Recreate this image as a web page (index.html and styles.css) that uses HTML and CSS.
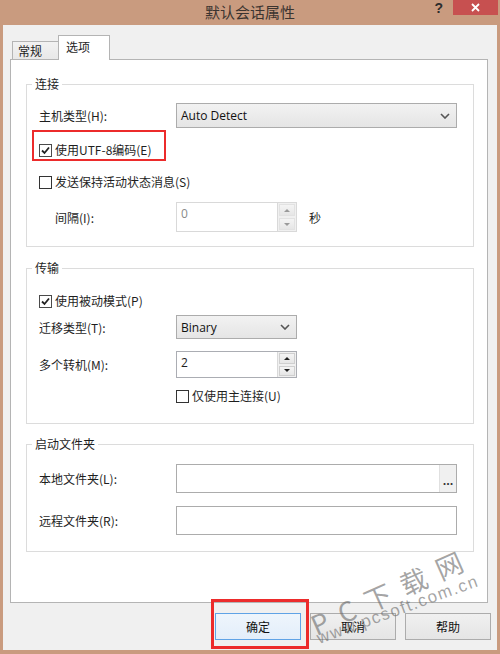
FILE: index.html
```html
<!DOCTYPE html>
<html lang="zh-CN">
<head>
    <meta charset="UTF-8">
    <meta name="viewport" content="width=device-width, initial-scale=1.0">
    <title>默认会话属性</title>
    <link rel="stylesheet" href="styles.css">
</head>
<body>
    <div class="titlebar">
        <span class="title">默认会话属性</span>
        <div class="controls">
            <span class="help">?</span>
            <span class="close">
                <svg width="9" height="9" viewBox="0 0 9 9"><path d="M1 1L8 8M8 1L1 8" stroke="#fff" stroke-width="1.8"/></svg>
            </span>
        </div>
    </div>

    <div class="client">
        <div class="tabs">
            <div class="tab">常规</div>
            <div class="tab active">选项</div>
        </div>

        <div class="panel">
            <fieldset class="group g1">
                <legend>连接</legend>
                <div class="row r-host">
                    <span class="lbl">主机类型(H):</span>
                    <div class="select wide">
                        <span>Auto Detect</span>
                        <svg width="10" height="6" viewBox="0 0 10 6"><path d="M1 1L5 5L9 1" fill="none" stroke="#555" stroke-width="1.6"/></svg>
                    </div>
                </div>
                <div class="row r-utf">
                    <label class="check hl">
                        <span class="box on"><svg width="11" height="11" viewBox="0 0 11 11"><path d="M2 5.5L4.5 8L9 2.5" fill="none" stroke="#222" stroke-width="1.8"/></svg></span>
                        使用UTF-8编码(E)
                        <span class="mark mark-utf"></span>
                    </label>
                </div>
                <div class="row r-keep">
                    <label class="check">
                        <span class="box"></span>
                        发送保持活动状态消息(S)
                    </label>
                </div>
                <div class="row r-interval">
                    <span class="lbl indent">间隔(I):</span>
                    <div class="spin disabled">
                        <span class="spin-val">0</span>
                        <span class="spin-btns">
                            <span class="sbtn"><i class="tri up"></i></span>
                            <span class="sbtn"><i class="tri down"></i></span>
                        </span>
                    </div>
                    <span class="unit">秒</span>
                </div>
            </fieldset>

            <fieldset class="group g2">
                <legend>传输</legend>
                <div class="row r-passive">
                    <label class="check">
                        <span class="box on"><svg width="11" height="11" viewBox="0 0 11 11"><path d="M2 5.5L4.5 8L9 2.5" fill="none" stroke="#222" stroke-width="1.8"/></svg></span>
                        使用被动模式(P)
                    </label>
                </div>
                <div class="row r-mode">
                    <span class="lbl">迁移类型(T):</span>
                    <div class="select narrow">
                        <span>Binary</span>
                        <svg width="10" height="6" viewBox="0 0 10 6"><path d="M1 1L5 5L9 1" fill="none" stroke="#555" stroke-width="1.6"/></svg>
                    </div>
                </div>
                <div class="row r-multi">
                    <span class="lbl">多个转机(M):</span>
                    <div class="spin short">
                        <span class="spin-val">2</span>
                        <span class="spin-btns">
                            <span class="sbtn"><i class="tri up"></i></span>
                            <span class="sbtn"><i class="tri down"></i></span>
                        </span>
                    </div>
                </div>
                <div class="row r-main">
                    <label class="check">
                        <span class="box"></span>
                        仅使用主连接(U)
                    </label>
                </div>
            </fieldset>

            <fieldset class="group g3">
                <legend>启动文件夹</legend>
                <div class="row r-local">
                    <span class="lbl">本地文件夹(L):</span>
                    <div class="field">
                        <span class="browse">...</span>
                    </div>
                </div>
                <div class="row r-remote">
                    <span class="lbl">远程文件夹(R):</span>
                    <div class="field"></div>
                </div>
            </fieldset>
        </div>

        <div class="actions">
            <button class="btn primary">确定<span class="mark mark-ok"></span></button>
            <button class="btn">取消</button>
            <button class="btn">帮助</button>
        </div>
    </div>

    <div class="watermark">
        <span class="wm-pc">PC下载网</span>
        <span class="wm-url">www.pcsoft.com.cn</span>
    </div>
</body>
</html>
```

FILE: styles.css
```css
body {
    margin: 0;
    width: 500px;
    height: 654px;
    overflow: hidden;
    position: relative;
    background-color: #c99b7f;
    font-family: "Noto Sans CJK SC", "Noto Sans", sans-serif;
    font-size: 12px;
    color: #1e1e1e;
}

.titlebar {
    height: 25px;
    display: grid;
    grid-template-columns: 1fr auto 1fr;
    align-items: start;
}

.title {
    grid-column: 2;
    font-size: 15px;
    line-height: 24px;
    color: #3b3430;
}

.controls {
    grid-column: 3;
    justify-self: end;
    display: flex;
    align-items: flex-start;
    margin-right: 2px;
}

.help {
    font-family: "Liberation Sans", sans-serif;
    font-weight: bold;
    font-size: 14px;
    line-height: 14px;
    color: #2d2d2d;
    margin: 1px 10px 0 0;
}

.close {
    width: 45px;
    height: 15px;
    background-color: #c75050;
    display: flex;
    align-items: center;
    justify-content: center;
}

.client {
    margin: 0 3px;
    height: 625px;
    box-sizing: border-box;
    background-color: #f0f0f0;
    padding: 10px 9px 0 7px;
}

/* tabs */
.tabs {
    display: flex;
    align-items: flex-end;
    height: 24px;
    padding-left: 2px;
    position: relative;
    z-index: 1;
}

.tab {
    width: 47px;
    height: 18px;
    box-sizing: border-box;
    border: 1px solid #b4b4b4;
    border-bottom: none;
    background: linear-gradient(#f2f2f2, #e8e8e8);
    padding-left: 5px;
    line-height: 17px;
}

.tab.active {
    width: 52px;
    height: 25px;
    margin-left: -1px;
    margin-bottom: -1px;
    background: #fff;
    padding-left: 7px;
    line-height: 21px;
}

.panel {
    height: 544px;
    box-sizing: border-box;
    border: 1px solid #b4b4b4;
    background-color: #fff;
    padding: 0 13px 0 15px;
}

/* groups */
.group {
    margin: 0;
    min-width: 0;
    border: 1px solid #dcdcdc;
    padding: 0 15px 14px 12px;
}

.group legend {
    padding: 0 3px;
    margin-left: -7px;
    line-height: 16px;
}

.g1 { margin-top: 16px; }
.g2 { margin-top: 13px; padding-bottom: 15px; }
.g3 { margin-top: 12px; padding-bottom: 16px; }

.row {
    display: flex;
    align-items: center;
}

.lbl {
    width: 137px;
    flex: none;
}

.lbl.indent {
    padding-left: 16px;
    box-sizing: border-box;
}

.r-host { margin-top: 11px; height: 25px; }
.r-utf { margin-top: 10px; height: 24px; }
.r-keep { margin-top: 8px; height: 24px; }
.r-interval { margin-top: 8px; height: 30px; }

.r-passive { margin-top: 13px; height: 24px; }
.r-mode { margin-top: 2px; height: 24px; }
.r-multi { margin-top: 12px; height: 27px; }
.r-main { margin-top: 6px; height: 24px; padding-left: 137px; }

.r-local { margin-top: 12px; height: 29px; }
.r-remote { margin-top: 13px; height: 29px; }

/* checkbox */
.check {
    display: flex;
    align-items: center;
    gap: 3px;
    line-height: 16px;
}

.box {
    width: 13px;
    height: 13px;
    box-sizing: border-box;
    border: 1px solid #333;
    background: #fff;
    display: flex;
    align-items: center;
    justify-content: center;
}

.box.on {
    border-color: #4a4a4a;
}

.hl {
    position: relative;
}

.mark {
    position: absolute;
    border: 2px solid #ec2b2b;
    pointer-events: none;
}

.mark-utf {
    left: -7px;
    top: -12px;
    width: 130px;
    height: 27px;
}

/* select */
.select {
    height: 100%;
    box-sizing: border-box;
    border: 1px solid #acacac;
    background: linear-gradient(#f2f2f2, #e5e5e5);
    display: flex;
    align-items: center;
    justify-content: space-between;
    padding: 0 6px 0 4px;
    font-family: "Open Sans", sans-serif;
    font-size: 12px;
    color: #111;
}

.select.wide { width: 281px; }
.select.narrow { width: 121px; }

/* spinner */
.spin {
    width: 121px;
    height: 100%;
    box-sizing: border-box;
    border: 1px solid #abadb3;
    background: #fff;
    display: flex;
}

.spin.disabled {
    border-color: #d9d9d9;
    color: #8a8a8a;
}

.spin-val {
    flex: 1;
    padding: 3px 0 0 4px;
    line-height: 16px;
    font-family: "Open Sans", sans-serif;
}

.spin-btns {
    width: 18px;
    display: flex;
    flex-direction: column;
    background: #f0f0f0;
    border-left: 1px solid #d9d9d9;
}

.sbtn {
    flex: 1;
    margin: 1px;
    border: 1px solid #cfcfcf;
    background: linear-gradient(#f4f4f4, #e6e6e6);
    display: flex;
    align-items: center;
    justify-content: center;
}

.spin.disabled .sbtn {
    border-color: #e2e2e2;
}

.tri {
    width: 0;
    height: 0;
    border-left: 3px solid transparent;
    border-right: 3px solid transparent;
}

.tri.up { border-bottom: 3px solid #222; }
.tri.down { border-top: 3px solid #222; }

.spin.disabled .tri.up { border-bottom-color: #9a9a9a; }
.spin.disabled .tri.down { border-top-color: #9a9a9a; }

.unit {
    margin-left: 12px;
}

/* text fields */
.field {
    width: 281px;
    height: 100%;
    box-sizing: border-box;
    border: 1px solid #acacac;
    background: #fff;
    display: flex;
    justify-content: flex-end;
}

.browse {
    width: 16px;
    background: #f0f0f0;
    border-left: 1px solid #e0e0e0;
    text-align: center;
    line-height: 30px;
    font-size: 11px;
    font-weight: bold;
    color: #333;
}

/* buttons */
.actions {
    display: flex;
    justify-content: flex-end;
    gap: 9px;
    margin: 10px -3px 0 0;
}

.btn {
    width: 86px;
    height: 27px;
    box-sizing: border-box;
    border: 1px solid #acacac;
    background: linear-gradient(#f0f0f0, #e5e5e5);
    font-family: "Noto Sans CJK SC", sans-serif;
    font-size: 12px;
    color: #111;
    padding: 0;
}

.btn.primary {
    position: relative;
    border-color: #5fa3e6;
    background: linear-gradient(#eef5fc, #e3eefa);
}

.mark-ok {
    left: -5px;
    top: -15px;
    width: 92px;
    height: 44px;
    border-width: 3px;
}

/* watermark overlay */
.watermark {
    position: absolute;
    inset: 0;
    pointer-events: none;
}

.wm-pc {
    position: absolute;
    left: 392px;
    top: 590px;
    transform: translate(-50%, -50%) rotate(-24deg);
    font-family: "Noto Sans CJK SC", sans-serif;
    font-size: 27px;
    letter-spacing: 12px;
    color: rgba(105, 105, 105, 0.6);
    white-space: nowrap;
}

.wm-url {
    position: absolute;
    left: 398px;
    top: 610px;
    line-height: 18px;
    transform: translate(-50%, -50%) rotate(-20deg);
    font-family: "Liberation Sans", sans-serif;
    font-size: 17px;
    letter-spacing: 1.5px;
    color: rgba(105, 105, 105, 0.6);
    white-space: nowrap;
}
```
